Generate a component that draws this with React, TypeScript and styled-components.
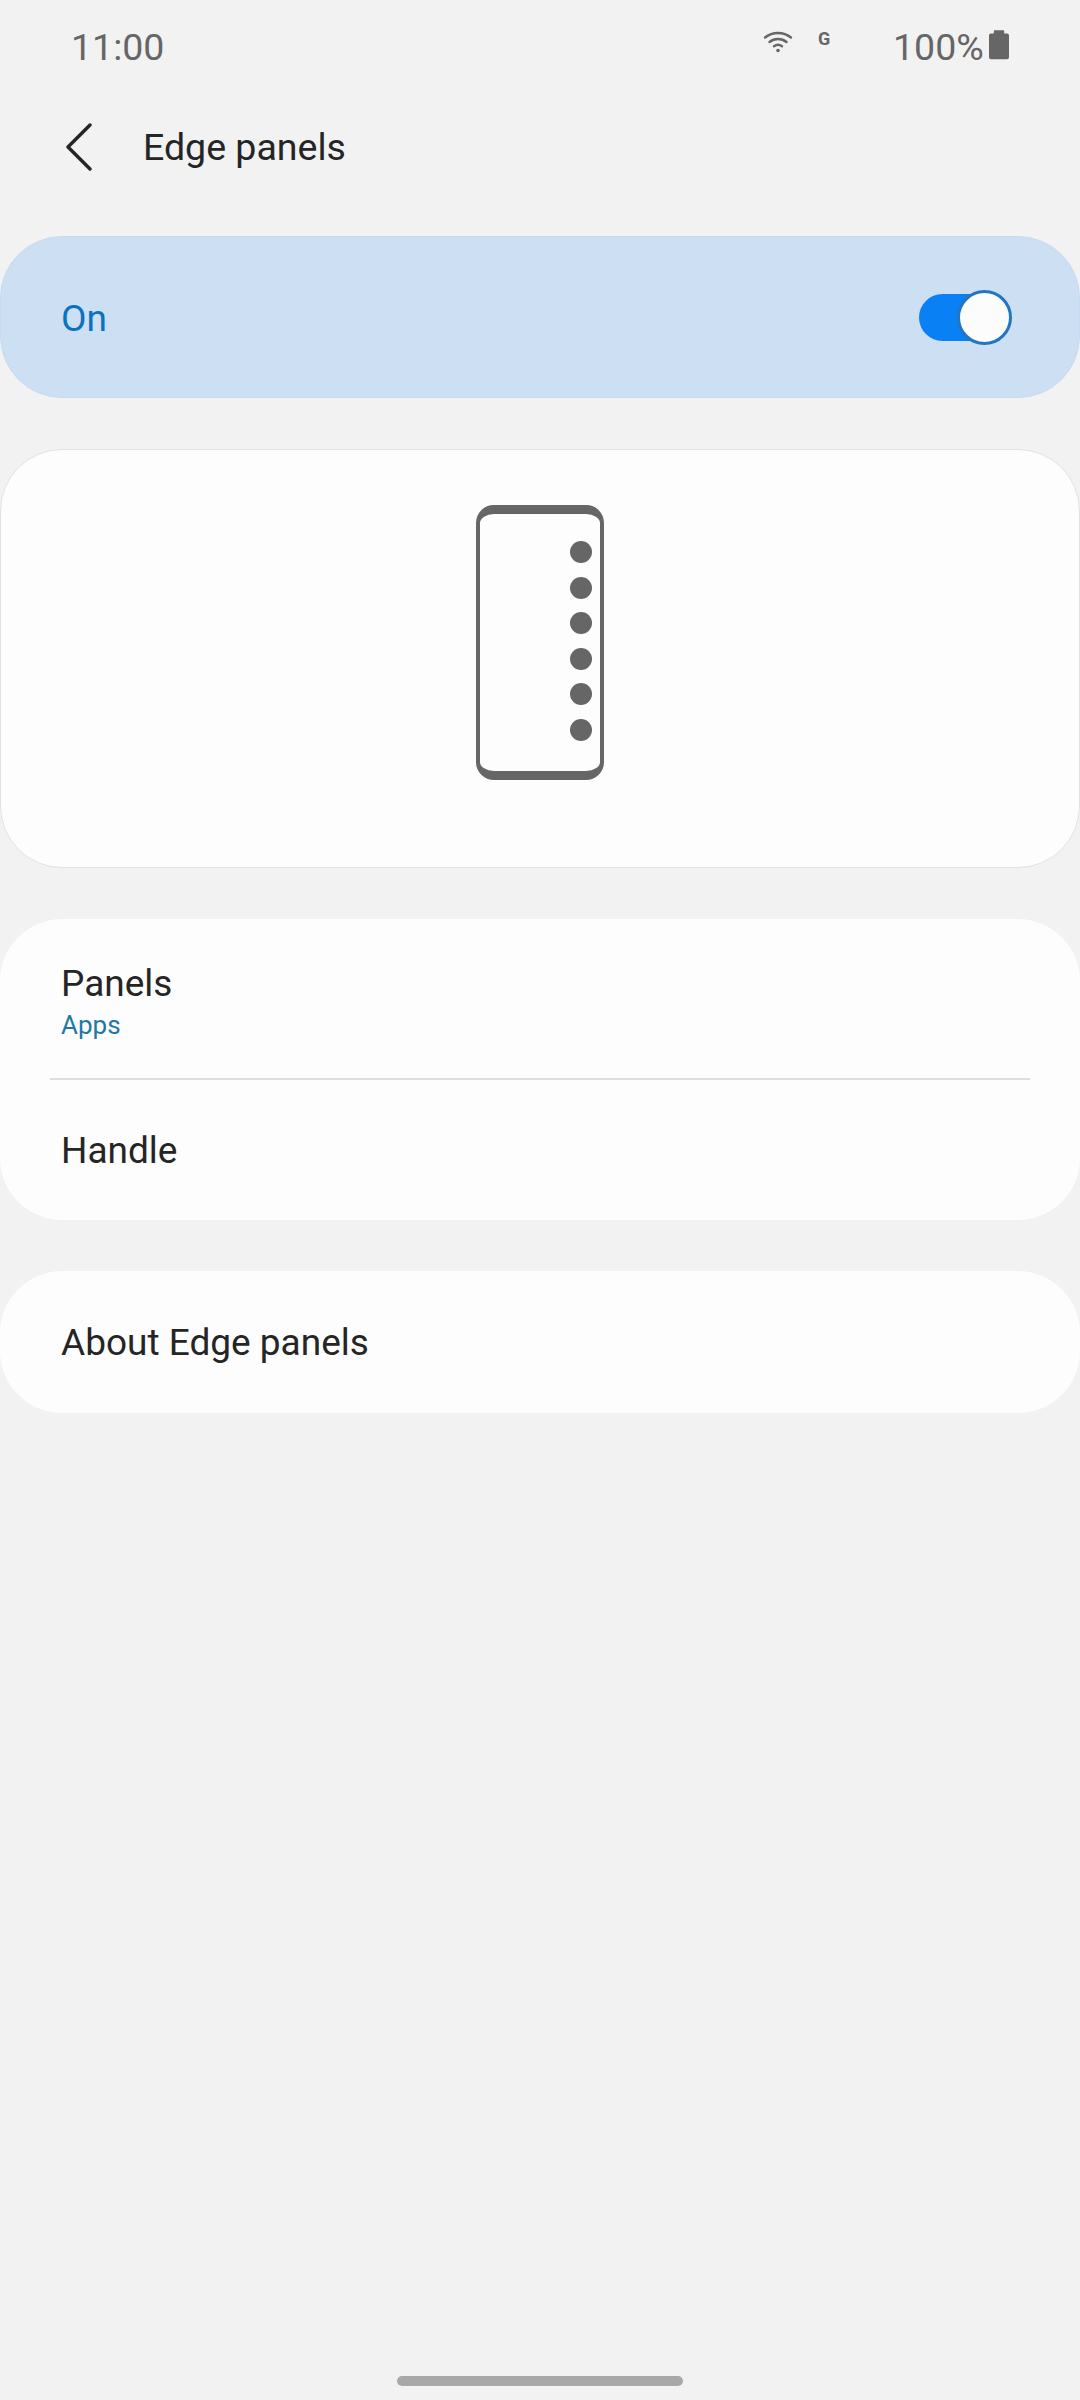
import styled, { createGlobalStyle } from 'styled-components';

const GlobalStyle = createGlobalStyle`
  html, body {
    margin: 0;
    padding: 0;
    background: #f2f2f2;
  }
  * {
    box-sizing: border-box;
  }
`;

const App = () => {
  return (
    <Screen>
      <GlobalStyle />
      <StatusBar>
        <Clock>11:00</Clock>
        <StatusRight>
          <svg width="30" height="24" viewBox="0 0 30 24" fill="none" stroke="#666" strokeWidth="2.4" strokeLinecap="round">
            <path d="M2 7.5C9.5 1.5 20.5 1.5 28 7.5" />
            <path d="M6.5 12C11.5 8 18.5 8 23.500 12" />
            <path d="M11 16.2C13.5 14.4 16.5 14.4 19 16.2" />
            <circle cx="15" cy="20.5" r="1.8" fill="#666" stroke="none" />
          </svg>
          <Network>G</Network>
          <Percent>100%</Percent>
          <svg width="20" height="31" viewBox="0 0 21 31" fill="#666">
            <path d="M6 0.5h9a1 1 0 0 1 1 1V4h3a2 2 0 0 1 2 2v23a2 2 0 0 1-2 2H2a2 2 0 0 1-2-2V6a2 2 0 0 1 2-2h3V1.500a1 1 0 0 1 1-1z" />
          </svg>
        </StatusRight>
      </StatusBar>

      <Toolbar>
        <svg width="28" height="48" viewBox="0 0 28 48" fill="none" stroke="#252525" strokeWidth="3.4" strokeLinecap="round" strokeLinejoin="round">
          <path d="M25 2L3 24L25 46" />
        </svg>
        <Title>Edge panels</Title>
      </Toolbar>

      <MainSwitch>
        <SwitchLabel>On</SwitchLabel>
        <Toggle>
          <Thumb />
        </Toggle>
      </MainSwitch>

      <PreviewCard>
        <PhoneFrame>
          <Dot />
          <Dot />
          <Dot />
          <Dot />
          <Dot />
          <Dot />
        </PhoneFrame>
      </PreviewCard>

      <Card>
        <TwoLineRow>
          <RowTitle>Panels</RowTitle>
          <RowSub>Apps</RowSub>
        </TwoLineRow>
        <Divider />
        <HandleRow>
          <RowTitle>Handle</RowTitle>
        </HandleRow>
      </Card>

      <Card>
        <AboutRow>
          <RowTitle>About Edge panels</RowTitle>
        </AboutRow>
      </Card>

      <Spacer />
      <HomeBar />
    </Screen>
  );
};

export default App;

const Screen = styled.div`
  width: 1080px;
  height: 2400px;
  display: flex;
  flex-direction: column;
  background: #f2f2f2;
  font-family: Roboto, 'Liberation Sans', sans-serif;
  overflow: hidden;
`;

const StatusBar = styled.div`
  height: 92px;
  padding: 25px 71px 0 71px;
  display: flex;
  justify-content: space-between;
  align-items: flex-start;
  color: #666;
`;

const Clock = styled.div`
  font-size: 37.5px;
  line-height: 44px;
`;

const StatusRight = styled.div`
  display: flex;
  align-items: flex-start;
  padding-top: 4px;

  svg:first-child {
    margin-top: 1px;
  }
`;

const Network = styled.div`
  font-size: 18px;
  font-weight: 700;
  line-height: 20px;
  margin-left: 25px;
  width: 75px;
`;

const Percent = styled.div`
  font-size: 37.5px;
  line-height: 44px;
  margin-top: -4px;
  width: 96px;
`;

const Toolbar = styled.div`
  height: 144px;
  padding: 0 0 34px 65px;
  display: flex;
  align-items: center;
  gap: 50px;
`;

const Title = styled.div`
  font-size: 37.5px;
  color: #252525;
`;

const MainSwitch = styled.div`
  height: 162px;
  border-radius: 62px;
  background: #cddff3;
  border: 1px solid #c6daf1;
  padding: 0 68px 0 60px;
  display: flex;
  justify-content: space-between;
  align-items: center;
`;

const SwitchLabel = styled.div`
  font-size: 37px;
  padding-top: 2px;
  color: #0a72c2;
`;

const Toggle = styled.div`
  position: relative;
  width: 80px;
  height: 47px;
  margin-right: 12px;
  border-radius: 24px;
  background: #0a80f5;
`;

const Thumb = styled.div`
  position: absolute;
  top: -4px;
  left: 38px;
  width: 55px;
  height: 55px;
  border-radius: 50%;
  background: #fcfcfc;
  border: 3px solid #2275c0;
`;

const PreviewCard = styled.div`
  height: 419px;
  margin-top: 51px;
  border-radius: 62px;
  background: #fdfdfd;
  border: 1px solid #e2e2e2;
  display: flex;
  justify-content: center;
  align-items: flex-start;
  padding-top: 55px;
`;

const PhoneFrame = styled.div`
  width: 128px;
  height: 275px;
  border-radius: 18px;
  border: solid #666;
  border-width: 9px 4px;
  display: flex;
  flex-direction: column;
  align-items: flex-end;
  gap: 13.6px;
  padding: 27px 8px 0 0;
`;

const Dot = styled.div`
  width: 22px;
  height: 22px;
  border-radius: 50%;
  background: #666;
`;

const Card = styled.div`
  margin-top: 51px;
  border-radius: 62px;
  background: #fdfdfd;
`;

const TwoLineRow = styled.div`
  height: 159px;
  padding: 43px 61px 0;
`;

const HandleRow = styled.div`
  height: 140px;
  padding: 2px 61px 0;
  display: flex;
  align-items: center;
`;

const AboutRow = styled.div`
  height: 142px;
  padding: 2px 61px 0;
  display: flex;
  align-items: center;
`;

const RowTitle = styled.div`
  font-size: 37px;
  line-height: 44px;
  color: #252525;
`;

const RowSub = styled.div`
  font-size: 26px;
  line-height: 32px;
  margin-top: 3px;
  color: #1f78a6;
`;

const Divider = styled.div`
  height: 2px;
  margin: 0 50px;
  background: #dedede;
`;

const Spacer = styled.div`
  flex: 1;
`;

const HomeBar = styled.div`
  align-self: center;
  width: 286px;
  height: 10px;
  margin-bottom: 14px;
  border-radius: 5px;
  background: #a8a8a8;
`;
